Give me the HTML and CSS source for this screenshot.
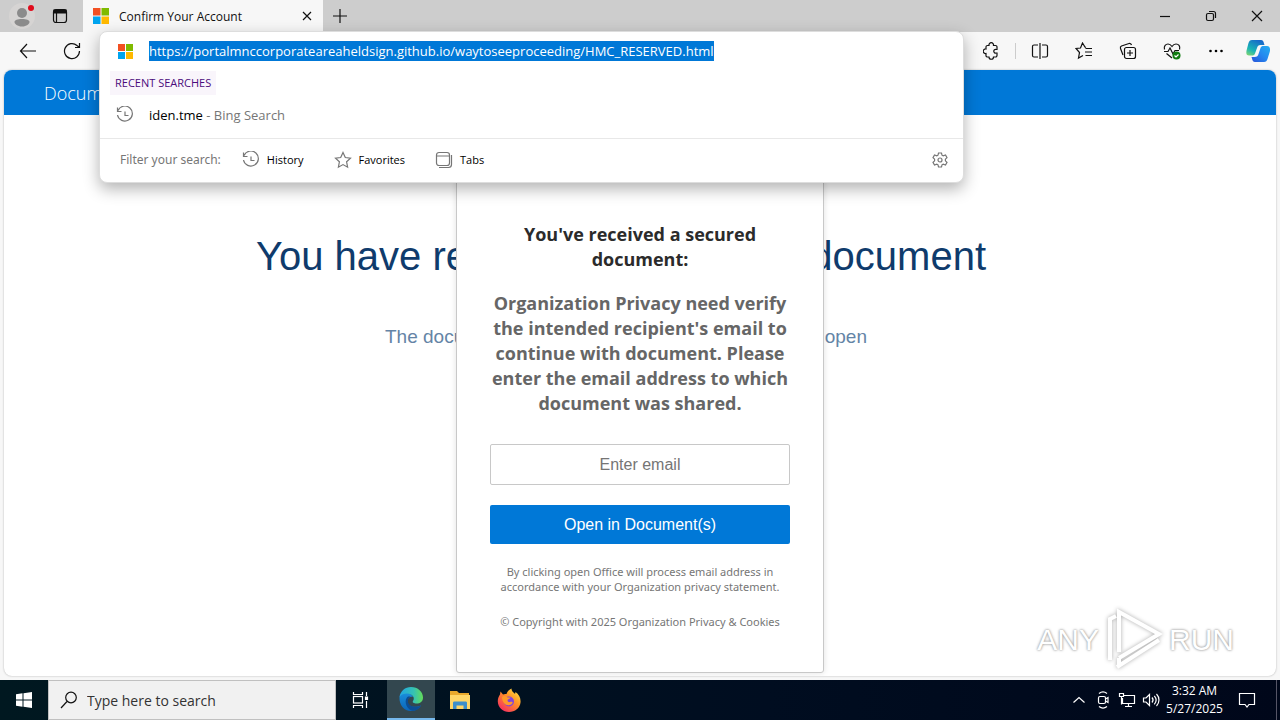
FILE: index.html
```html
<!DOCTYPE html>
<html lang="en">
<head>
<meta charset="UTF-8" />
<meta name="viewport" content="width=device-width, initial-scale=1" />
<title>Confirm Your Account</title>
<link rel="stylesheet" href="styles.css">
</head>
<body>
  <!-- shared icons -->
  <svg class="defs" aria-hidden="true">
    <symbol id="ms" viewBox="0 0 16 16">
      <path fill="#f25022" d="M0 0h7.5v7.5H0z"/><path fill="#7fba00" d="M8.500 0H16v7.500H8.500z"/>
      <path fill="#00a4ef" d="M0 8.500h7.500V16H0z"/><path fill="#ffb900" d="M8.500 8.500H16V16H8.500z"/>
    </symbol>
    <symbol id="history" viewBox="0 0 18 18">
      <path d="M2 4.500A7.500 7.500 0 1 1 1.500 9M1.500 1.500v4h4M9 5.500v4h3.500"/>
    </symbol>
  </svg>

  <div class="tab-strip">
    <button class="strip-btn profile" aria-label="Profile">
      <svg width="32" height="32" viewBox="0 0 32 32"><circle cx="16" cy="16" r="13" fill="#d6d4d3"/><circle cx="16" cy="13" r="5" fill="#8b8b8b"/><path fill="#8b8b8b" d="M8.500 22c0-2 3-3 7.500-3s7.500 1 7.500 3-3 4.500-7.500 4.500S8.500 24 8.500 22z"/><circle cx="25" cy="8" r="3" fill="#e00b1c"/></svg>
    </button>
    <button class="strip-btn workspaces" aria-label="Tab actions">
      <svg class="line" width="16" height="16" viewBox="0 0 16 16"><rect x="1.500" y="1.500" width="13" height="13" rx="2.500"/><path d="M4.500 5v9"/><path fill="#111" d="M2 2h12v3H2z"/></svg>
    </button>
    <div class="tab">
      <svg width="16" height="16"><use href="#ms"/></svg>
      <span class="tab-title">Confirm Your Account</span>
      <button class="tab-close" aria-label="Close tab"><svg class="line" width="10" height="10" viewBox="0 0 10 10"><path d="M1 1l8 8M9 1L1 9"/></svg></button>
    </div>
    <button class="new-tab" aria-label="New tab"><svg class="line" width="14" height="14" viewBox="0 0 14 14"><path d="M7 0v14M0 7h14"/></svg></button>
    <div class="window-controls">
      <button aria-label="Minimize"><svg class="line" width="12" height="12" viewBox="0 0 12 12"><path d="M1 6.500h10"/></svg></button>
      <button aria-label="Restore"><svg class="line" width="12" height="12" viewBox="0 0 12 12"><rect x="1.500" y="3.500" width="7" height="7" rx="1.500"/><path d="M4 1.500h4.500a2 2 0 0 1 2 2V8"/></svg></button>
      <button aria-label="Close"><svg class="line" width="12" height="12" viewBox="0 0 12 12"><path d="M1 1l10 10M11 1L1 11"/></svg></button>
    </div>
  </div>

  <div class="toolbar">
    <button class="tool" aria-label="Back"><svg class="line" width="18" height="18" viewBox="0 0 18 18"><path d="M17 9H1.500M8 2L1.500 9 8 16"/></svg></button>
    <button class="tool" aria-label="Refresh"><svg class="line" width="18" height="18" viewBox="0 0 18 18"><path d="M16.500 9A7.500 7.500 0 1 1 14 3.500L16.500 5.500M16.500 1v4.500H12"/></svg></button>

    <div class="tools-right">
      <button class="tool" aria-label="Extensions"><svg class="line" width="16" height="18" viewBox="0 0 16 18"><path d="M3 5a1.500 1.500 0 0 1 1.500-1.500H6a2.300 2.300 0 1 1 4.500 0H12.500a1.500 1.500 0 0 1 1.500 1.500v2.500h-1a1.800 1.800 0 1 0 0 3.500h1v2.500a1.500 1.500 0 0 1-1.500 1.500H10.500a2.200 2.200 0 0 1-4.500 0H4.500A1.500 1.500 0 0 1 3 14v-2.500a2.300 2.300 0 1 1 0-4.500z"/></svg></button>
      <span class="divider"></span>
      <button class="tool" aria-label="Split screen"><svg class="line" width="18" height="18" viewBox="0 0 18 18"><path d="M9 1v16M7 3H3a1.500 1.500 0 0 0-1.500 1.500v9A1.500 1.500 0 0 0 3 15H7M11 3h4a1.500 1.500 0 0 1 1.500 1.500v9A1.500 1.500 0 0 1 15 15H11"/></svg></button>
      <button class="tool" aria-label="Favorites"><svg class="line" width="18" height="18" viewBox="0 0 18 18"><path d="M11 5.500L10 5 7.500 1 5.500 6 1 6.500l3.500 4L3.500 16 8 13.500M10.500 6.500h6.500M10 10h7M10.500 13.500h6.500"/></svg></button>
      <button class="tool" aria-label="Collections"><svg class="line" width="18" height="18" viewBox="0 0 18 18"><path d="M4 13L1.500 6.500a2 2 0 0 1 1-2.500L10 1.500a2 2 0 0 1 2.500 1.500"/><rect x="5.500" y="5.500" width="11" height="11" rx="2"/><path d="M11 8v6M8 11h6"/></svg></button>
      <button class="tool" aria-label="Browser essentials"><svg class="line" width="18" height="18" viewBox="0 0 18 18"><path d="M1.500 7.500C.5 4 3 2 5 2c2 0 3 1 4 2.500C10 3 11 2 13 2c2.500 0 4.500 2 3.500 5.500M1 9.500h4L7 6l3 6 2-3.500h4M3.500 11.500L9 16"/><circle cx="13.500" cy="13.500" r="4" fill="#107c10" stroke="none"/><path stroke="#fff" d="M11.500 13.500l1.500 1.500 2.500-2.500"/></svg></button>
      <button class="tool" aria-label="Settings and more"><svg width="16" height="4" viewBox="0 0 16 4"><circle cx="2.500" cy="2" r="1.300"/><circle cx="8" cy="2" r="1.300"/><circle cx="13.500" cy="2" r="1.300"/></svg></button>
      <button class="tool copilot" aria-label="Copilot">
        <svg width="24" height="24" viewBox="0 0 24 24">
          <defs>
            <linearGradient id="cp1" x1="0" y1="1" x2=".6" y2="0"><stop offset="0" stop-color="#8bd96b"/><stop offset=".4" stop-color="#19b5b5"/><stop offset="1" stop-color="#176bc9"/></linearGradient>
            <linearGradient id="cp2" x1="0" y1="1" x2="1" y2="0"><stop offset="0" stop-color="#2853d8"/><stop offset=".5" stop-color="#2488ef"/><stop offset="1" stop-color="#24aef0"/></linearGradient>
          </defs>
          <path fill="url(#cp1)" d="M6 1h9c2 0 2.500 1.500 3 3.500l.5 1.500h-4c-2 0-3 1-3.500 3l-2 5.500c-.5 1.500-1.500 2-3 2H3c-3 0-3-3-2.200-6L2.500 4C3.200 2 4 1 6 1z"/>
          <path fill="url(#cp2)" d="M18 23H9c-2 0-2.500-1.500-3-3.500L5.500 18h3c2.500 0 3.500-1 4-3l2-6c.5-1.500 1.500-2 3-2H21c3 0 3.500 3 2.700 6L21.500 20c-.7 2-1.500 3-3.500 3z"/>
        </svg>
      </button>
    </div>

    <div class="omnibox">
      <div class="url-row">
        <svg width="15" height="15"><use href="#ms"/></svg>
        <input class="url" type="text" aria-label="Address" size="78" value="https://portalmnccorporateareaheldsign.github.io/waytoseeproceeding/HMC_RESERVED.html">
      </div>
      <div class="recent">RECENT SEARCHES</div>
      <a class="suggestion" href="#">
        <svg class="line" width="18" height="18"><use href="#history"/></svg>
        <span><b>iden.tme</b> - Bing Search</span>
      </a>
      <div class="filters">
        <span class="filter-label">Filter your search:</span>
        <button><svg class="line" width="18" height="18"><use href="#history"/></svg>History</button>
        <button><svg class="line" width="18" height="18" viewBox="0 0 18 18"><path d="M9 1.500l2.300 5 5.200.6-3.900 3.700 1 5.400L9 13.600l-4.600 2.600 1-5.400L1.500 7.100l5.200-.6z"/></svg>Favorites</button>
        <button><svg class="line" width="18" height="18" viewBox="0 0 18 18"><rect x="1.500" y="1.500" width="13" height="13" rx="2.500"/><path d="M1.500 5h13M16.500 4v9.500a3 3 0 0 1-3 3H4"/></svg>Tabs</button>
        <button class="gear" aria-label="Search settings"><svg class="line" width="16" height="16" viewBox="0 0 16 16"><circle cx="8" cy="8" r="2"/><path d="M6.500 1h3l.5 2.200 1.200.6 2.300-.8 1.500 2.600L13.400 7.200v1.600L15 10.400 13.500 13l-2.300-.8-1.200.6-.5 2.200h-3L6 12.800l-1.200-.6-2.300.8L1 10.400l1.600-1.600V7.200L1 5.600 2.500 3l2.300.8L6 3.200z"/></svg></button>
      </div>
    </div>
  </div>

  <div class="page">
    <header class="page-header">Document</header>
    <main class="page-main">
      <div class="backdrop">
        <p class="backdrop-title"><span>You have rec</span><span>document</span></p>
        <p class="backdrop-sub"><span>The docum</span><span>open</span></p>
      </div>
      <form class="card">
        <h1>You've received a secured document:</h1>
        <h2>Organization Privacy need verify the intended recipient's email to continue with document. Please enter the email address to which document was shared.</h2>
        <input class="email" type="email" aria-label="Enter email" placeholder="Enter email">
        <button class="open" type="button">Open in Document(s)</button>
        <p>By clicking open Office will process email address in accordance with your Organization privacy statement.</p>
        <p class="copyright">© Copyright with 2025 Organization Privacy &amp; Cookies</p>
      </form>
    </main>
    <div class="watermark">
      <span>ANY</span>
      <svg width="58" height="64" viewBox="0 0 58 64"><path d="M5 52V11l6-3M14 44V4l40 22-40 24M12 59l42-27M14 50v9"/></svg>
      <span>RUN</span>
    </div>
  </div>

  <div class="taskbar">
    <button class="task start" aria-label="Start"><svg width="16" height="16" viewBox="0 0 16 16"><path fill="#fff" d="M0 2.200L6.500 1.300v6.200H0zM7.500 1.200L16 0v7.500H7.500zM0 8.500h6.500v6.200L0 13.800zM7.500 8.500H16V16l-8.500-1.200z"/></svg></button>
    <label class="search">
      <svg class="line" width="18" height="18" viewBox="0 0 18 18"><circle cx="11" cy="6.500" r="5.300"/><path d="M7 10.500L1 17"/></svg>
      <input type="text" aria-label="Search" placeholder="Type here to search">
    </label>
    <button class="task" aria-label="Task view"><svg class="line light" width="18" height="18" viewBox="0 0 18 18"><path d="M1.500 1v2.500h9V1M1.500 17v-2.500h9V17M14.500 1v4M14.500 10v7"/><rect x="1.500" y="5.500" width="9" height="6.500"/><path fill="#fff" d="M13.500 6h2v2.500h-2z"/></svg></button>
    <button class="task active" aria-label="Microsoft Edge">
      <svg width="24" height="24" viewBox="0 0 24 24">
        <defs>
          <linearGradient id="e1" x1="0" y1="0" x2="1" y2="0"><stop offset="0" stop-color="#20a5e4"/><stop offset=".6" stop-color="#35c1b4"/><stop offset="1" stop-color="#64dc58"/></linearGradient>
          <linearGradient id="e2" x1="0" y1="0" x2="0" y2="1"><stop offset="0" stop-color="#1a8fdc"/><stop offset="1" stop-color="#0b65b8"/></linearGradient>
        </defs>
        <path fill="url(#e2)" d="M.5 10C2 3 12 5 14 10c-3-1-5.500 1-5.500 4 0 5 6 7.500 13.500 4.500C20 22 16.500 24 12 24 5 24 0 18 .5 10z"/>
        <path fill="#0c4d94" d="M9 9.500C5 12 6 21 13 23.800c4 .2 7.500-2.300 9-5.300-5 2.500-11.500 1.500-13-3-.5-2 .3-4.500 2.500-6z"/>
        <path fill="url(#e1)" d="M.5 10C1.500 4 6 0 12 0c7 0 12 5 12 10.500 0 4-3 6-6.500 6-2.500 0-4.500-1-3.500-2.500 2.500-3.500-1-7.500-6-7.500-3 0-6 1-7.500 3.500z"/>
      </svg>
    </button>
    <button class="task" aria-label="File Explorer"><svg width="22" height="20" viewBox="0 0 22 20"><path fill="#e9a92c" d="M1 1h7l2 2h10v4H1z"/><path fill="#ffd667" d="M1 5h20v14H1z"/><path fill="#3d8fcb" d="M4 19v-6c0-1 .5-1.500 1.500-1.500h11c1 0 1.500.5 1.500 1.500v6h-3.500v-3.500h-7V19z"/></svg></button>
    <button class="task" aria-label="Firefox">
      <svg width="24" height="24" viewBox="0 0 24 24">
        <defs><linearGradient id="ff" x1="1" y1="0" x2=".2" y2="1"><stop offset="0" stop-color="#fff04b"/><stop offset=".45" stop-color="#ff9525"/><stop offset="1" stop-color="#f52a62"/></linearGradient></defs>
        <path fill="url(#ff)" d="M3.500 3.500L6 6.500c1-.5 2-.8 3.500-.5C10.500 3.500 12 1.500 14.500.5c0 3 2 3.500 3.500 5.500l.5-2c3.500 2.500 5.500 6 5 10.500C23 20 18 24 12 24S1 19.500.8 13.500C.7 10 2 8 3 6.500z"/>
        <circle cx="12" cy="13.500" r="5" fill="#8044dc"/>
        <path fill="#ff9a28" d="M5 9c2-1.500 4-1 5.500.5h3c-.5 1.500-3 1.500-3 3 0 1 1 2 2.500 1.500 2-.5 3 0 2.500 1-1.500 3-6.500 3-8.500 0C5.500 13 5 11 5 9z"/>
      </svg>
    </button>

    <div class="tray">
      <button aria-label="Show hidden icons"><svg class="line light" width="14" height="8" viewBox="0 0 14 8"><path d="M1.500 6.500L7 1.500l5.500 5"/></svg></button>
      <button aria-label="Meet now"><svg class="line light" width="16" height="18" viewBox="0 0 16 18"><rect x="3.500" y="5.500" width="7" height="7" rx="1.500"/><path d="M10.500 8l2.500-1.500v5L10.500 10M4 2.500c2.500-2 5.500-2 8 0M4 15.500c2.500 2 5.500 2 8 0"/></svg></button>
      <button aria-label="Network"><svg class="line light" width="18" height="16" viewBox="0 0 18 16"><path d="M6 3.500h10.500v8H4.500V6M10.500 11.500v3M7 14.500h7"/><path d="M1.500 1.500h4v3h-4zM3.500 4.500v8"/></svg></button>
      <button aria-label="Volume"><svg class="line light" width="18" height="14" viewBox="0 0 18 14"><path d="M1.500 5v4H4l3.500 3.500v-11L4 5zM10 4.500c1.300 1.500 1.300 3.500 0 5M12.300 2.800c2.200 2.500 2.200 6 0 8.500M14.500 1c3.300 3.500 3.300 8.500 0 12"/></svg></button>
      <div class="clock"><div>3:32 AM</div><div>5/27/2025</div></div>
      <button class="notify" aria-label="Notifications"><svg class="line light" width="18" height="18" viewBox="0 0 18 18"><path d="M1.500 2.500h15v11H11L9 16l-2-2.500H1.500z"/></svg></button>
    </div>
  </div>
</body>
</html>
```
FILE: styles.css
```css
:root {
  --blue: #0078d7;
  --chrome: #f7f7f7;
  --strip: #cdcdcd;
}

* {
  box-sizing: border-box;
}

body {
  margin: 0;
  height: 100vh;
  display: flex;
  flex-direction: column;
  overflow: hidden;
  background: var(--chrome);
  color: #111;
  font-family: "Open Sans", "Noto Sans", sans-serif;
  font-size: 12px;
}

button, input {
  font: inherit;
  color: inherit;
  border: none;
  padding: 0;
  margin: 0;
  background: none;
}

button {
  display: flex;
  align-items: center;
  justify-content: center;
}

p, h1, h2 {
  margin: 0;
}

svg {
  flex: none;
}

.defs {
  display: none;
}

.line {
  fill: none;
  stroke: #111;
  stroke-width: 1.2;
}

.light {
  stroke: #fff;
}

/* tab strip */
.tab-strip {
  display: flex;
  align-items: center;
  height: 32px;
  background: var(--strip);
}

.strip-btn {
  height: 32px;
}

.profile {
  width: 44px;
}

.workspaces {
  width: 32px;
}

.tab {
  display: flex;
  align-items: center;
  gap: 10px;
  width: 240px;
  height: 32px;
  margin-left: 7px;
  padding: 0 10px;
  background: var(--chrome);
}

.tab-title {
  flex: 1;
  white-space: nowrap;
}

.tab-close {
  width: 12px;
}

.new-tab {
  width: 34px;
  height: 32px;
}

.window-controls {
  display: flex;
  margin-left: auto;
}

.window-controls button {
  width: 46px;
  height: 32px;
}

/* toolbar */
.toolbar {
  position: relative;
  z-index: 2;
  display: flex;
  align-items: center;
  height: 38px;
  padding-left: 6px;
}

.tool {
  width: 44px;
  height: 38px;
}

.tools-right {
  display: flex;
  align-items: center;
  margin-left: auto;
}

.divider {
  width: 1px;
  height: 16px;
  margin: 0 2px;
  background: #ccc;
}

.copilot {
  width: 42px;
  padding-right: 2px;
}

.omnibox {
  position: absolute;
  top: -1px;
  left: 99px;
  right: 316px;
  background: #fff;
  border: 1px solid #ddd;
  border-radius: 8px;
  box-shadow: 0 6px 16px rgba(0, 0, 0, 0.3);
  font-size: 13px;
}

.omnibox .line {
  stroke: #767676;
}

.url-row {
  display: flex;
  align-items: center;
  gap: 16px;
  height: 38px;
  padding-left: 18px;
}

.url {
  height: 20px;
  background: var(--blue);
  color: #fff;
  field-sizing: content;
}

.recent {
  width: max-content;
  margin: 1px 0 0 10px;
  padding: 0 5px;
  line-height: 24px;
  background: #f9f5fb;
  color: #4b0c7c;
  font-size: 11px;
}

.suggestion {
  display: flex;
  align-items: center;
  gap: 15px;
  height: 40px;
  margin-bottom: 3px;
  padding-left: 16px;
  color: #767676;
  text-decoration: none;
}

.suggestion b {
  color: #000;
  font-weight: 400;
}

.filters {
  display: flex;
  align-items: center;
  height: 44px;
  padding: 0 15px 2px 20px;
  border-top: 1px solid #e8e8e8;
}

.filters button {
  gap: 7px;
  margin-right: 30px;
  font-size: 11px;
  color: #000;
}

.filter-label {
  margin-right: 21px;
  color: #767676;
  font-family: "Noto Sans", sans-serif;
  font-size: 12px;
}

.filters .gear {
  margin: 0 0 0 auto;
}

/* page */
.page {
  position: relative;
  flex: 1;
  display: flex;
  flex-direction: column;
  margin: 0 4px 4px;
  overflow: hidden;
  background: #fff;
  border-radius: 8px;
  box-shadow: 0 0 2px #aaa;
}

.page-header {
  padding-left: 40px;
  line-height: 47px;
  height: 45px;
  background: var(--blue);
  color: #fff;
  font-size: 18px;
  font-weight: 300;
}

.page-main {
  position: relative;
  display: flex;
  justify-content: center;
  padding-top: 30px;
}

/* sits behind the card */
.backdrop {
  position: absolute;
  inset: 0;
  display: flex;
  flex-direction: column;
  align-items: center;
  padding: 116px 38px 0 0;
  font-family: "Liberation Sans", Arial, sans-serif;
}

.backdrop p {
  display: flex;
  justify-content: space-between;
}

.backdrop-title {
  width: 730px;
  color: #0f3b6c;
  font-size: 40px;
  line-height: 50px;
}

.backdrop-sub {
  width: 492px;
  margin-top: 44px;
  padding-left: 10px;
  color: #6484a6;
  font-size: 19px;
  line-height: 24px;
}

.card {
  position: relative;
  width: 368px;
  padding: 76px 33px 43px;
  background: #fff;
  border: 1px solid #c8c8c8;
  border-radius: 3px;
  box-shadow: 0 0 6px rgba(0, 0, 0, 0.12);
  color: #767676;
  text-align: center;
}

.card h1, .card h2 {
  font-size: 18px;
  line-height: 25px;
  font-weight: 700;
}

.card h1 {
  color: #2b2b2b;
}

.card h2 {
  margin-top: 19px;
  color: #666;
}

.email {
  width: 100%;
  height: 41px;
  margin-top: 28px;
  border: 1px solid #c8c8c8;
  border-radius: 2px;
  text-align: center;
}

.email, .open {
  font-family: "Liberation Sans", Arial, sans-serif;
  font-size: 16px;
}

.open {
  width: 100%;
  height: 39px;
  margin: 20px 0;
  background: var(--blue);
  border-radius: 2px;
  color: #fff;
}

.card p {
  font-family: "Noto Sans", sans-serif;
  font-size: 11px;
  line-height: 15px;
}

.card .copyright {
  margin-top: 20px;
  white-space: nowrap;
}

.watermark {
  position: absolute;
  right: 42px;
  bottom: 4px;
  display: flex;
  align-items: center;
  gap: 6px;
  color: #fff;
  font-family: "Liberation Sans", Arial, sans-serif;
  font-size: 30px;
  text-shadow: 0 0 3px #999, 0 0 2px #bbb;
}

.watermark svg {
  fill: none;
  stroke: #fff;
  stroke-width: 4;
  filter: drop-shadow(0 0 2px #aaa);
}

/* taskbar */
.taskbar {
  display: flex;
  height: 40px;
  background: linear-gradient(90deg, #001820, #000d20 60%, #00071a);
  color: #fff;
}

.task {
  width: 49px;
}

.task.start {
  width: 48px;
}

.task.active {
  width: 48px;
  margin-left: 2px;
  background: #33474f;
  border-bottom: 2px solid #76b9ed;
}

.search {
  display: flex;
  align-items: center;
  gap: 9px;
  width: 288px;
  padding-left: 11px;
  background: #f1f1f1;
  border: 1px solid #c0c0c0;
}

.search input {
  flex: 1;
  font-size: 14px;
}

.search input::placeholder {
  color: #333;
}

.tray {
  display: flex;
  align-items: center;
  margin-left: auto;
  margin-right: 3px;
  border-right: 1px solid #556;
}

.tray button {
  width: 24px;
  height: 40px;
}

.clock {
  width: 63px;
  line-height: 18px;
  text-align: center;
}

.tray .notify {
  width: 42px;
  margin-right: 8px;
}
```
